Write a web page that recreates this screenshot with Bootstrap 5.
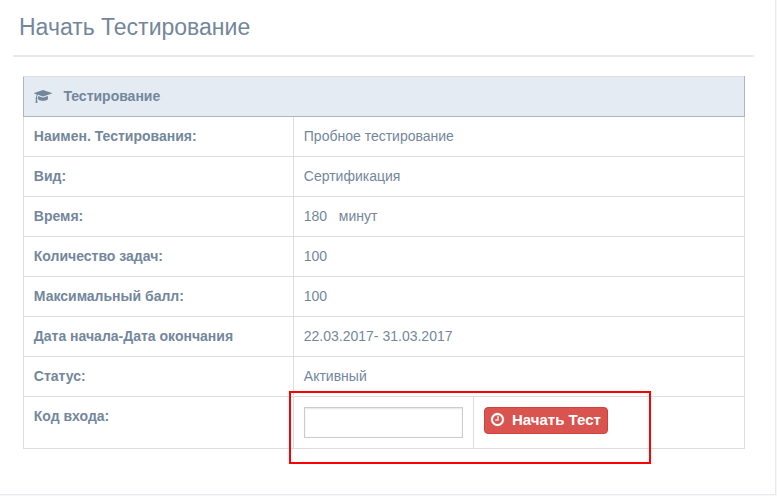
<!DOCTYPE html>
<html lang="ru">
<head>
<meta charset="utf-8">
<meta name="viewport" content="width=device-width, initial-scale=1">
<title>Начать Тестирование</title>
<link href="https://cdn.jsdelivr.net/npm/bootstrap@5.3.0/dist/css/bootstrap.min.css" rel="stylesheet">
<style>
body{background:#f7f7f7;color:#73879c;font:14px/19px "Liberation Sans",Arial,sans-serif;overflow:hidden}
.panel{width:776px;height:495px;background:#fff;border:1px solid #e6e9ed;border-width:0 1px 1px 0;padding-left:13px}
.panel-head{width:741px;height:57px;border-bottom:2px solid #e6e9ed;padding:13px 6px 0}
.panel-head h2{font-size:23px;line-height:28px;font-weight:400;color:#73879c}
.test-table{width:722px;margin:19px 0 0 10px;table-layout:fixed;border-collapse:collapse;color:#73879c}
.test-table th,.test-table td{height:40px;padding:10px;border:1px solid #ddd;vertical-align:top;text-align:left}
.test-table th,.test-table td{padding-left:9.8px}
.test-table thead th{background:#e4ebf3;border-color:#ddd #adb5be #adb5be}
.test-table tr.code-row>*{height:52px}
.test-table tr.code-row>td{padding-left:10px}
.cap{width:18px;height:15px;margin:-2px 11.6px 0 0;vertical-align:-3px}
.code-input{width:159px;height:31px;border:1px solid #ccc;border-radius:0;box-shadow:inset 0 1px 2px rgba(0,0,0,.1)}
.btn-start{height:27px;background:#d9534f;border:1px solid #d43f3a;border-radius:4px;color:#fff;font-size:15px;font-weight:700;line-height:18px;padding:0 6px 2px}
.btn-start:hover{background:#c9302c;color:#fff}
.clock{width:15px;height:15px;margin:0 7px 0 -1px;stroke:currentColor;stroke-width:36}
.highlight{left:289px;top:391px;width:362px;height:73px;border:2px solid #f00;pointer-events:none}
</style>
<script src="https://cdn.jsdelivr.net/npm/bootstrap@5.3.0/dist/js/bootstrap.bundle.min.js"></script>
</head>
<body>
<main class="panel position-relative">
  <header class="panel-head"><h2 class="m-0">Начать Тестирование</h2></header>
  <table class="test-table">
    <colgroup><col style="width:270px"><col style="width:180px"><col></colgroup>
    <thead>
      <tr><th colspan="3"><svg class="cap" viewBox="0 0 2304 1792" preserveAspectRatio="none" fill="currentColor" aria-hidden="true"><path d="M1774 836l18 316q4 69-82 128t-235 93.5-323 34.5-323-34.5-235-93.5-82-128l18-316 574 181q22 7 48 7t48-7zM2304 512q0 23-22 31l-1120 352q-4 1-10 1t-10-1l-652-206q-43 34-71 111.5t-34 178.5q63 36 63 109 0 69-58 107l58 433q2 14-8 25-9 11-24 11h-192q-15 0-24-11-10-11-8-25l58-433q-58-38-58-107 0-73 65-111 11-207 98-330l-333-104q-22-8-22-31t22-31l1120-352q4-1 10-1t10 1l1120 352q22 8 22 31z"/></svg>Тестирование</th></tr>
    </thead>
    <tbody>
      <tr><th>Наимен. Тестирования:</th><td colspan="2">Пробное тестирование</td></tr>
      <tr><th>Вид:</th><td colspan="2">Сертификация</td></tr>
      <tr><th>Время:</th><td colspan="2">180 &nbsp; минут</td></tr>
      <tr><th>Количество задач:</th><td colspan="2">100</td></tr>
      <tr><th>Максимальный балл:</th><td colspan="2">100</td></tr>
      <tr><th>Дата начала-Дата окончания</th><td colspan="2">22.03.2017- 31.03.2017</td></tr>
      <tr><th>Статус:</th><td colspan="2">Активный</td></tr>
      <tr class="code-row"><th>Код входа:</th>
        <td><input class="form-control code-input p-0" type="text" aria-label="Код входа"></td>
        <td><button type="button" class="btn btn-start d-inline-flex align-items-center"><svg class="clock" viewBox="0 0 1792 1792" fill="currentColor" aria-hidden="true"><path d="M1024 544v448q0 14-9 23t-23 9h-320q-14 0-23-9t-9-23v-64q0-14 9-23t23-9h224v-352q0-14 9-23t23-9h64q14 0 23 9t9 23zm416 352q0-148-73-273t-198-198-273-73-273 73-198 198-73 273 73 273 198 198 273 73 273-73 198-198 73-273zm224 0q0 209-103 385.5t-279.5 279.5-385.5 103-385.5-103-279.5-279.5-103-385.5 103-385.5 279.5-279.5 385.5-103 385.5 103 279.5 279.5 103 385.5z"/></svg>Начать Тест</button></td></tr>
    </tbody>
  </table>
  <div class="highlight position-absolute"></div>
</main>
</body>
</html>
